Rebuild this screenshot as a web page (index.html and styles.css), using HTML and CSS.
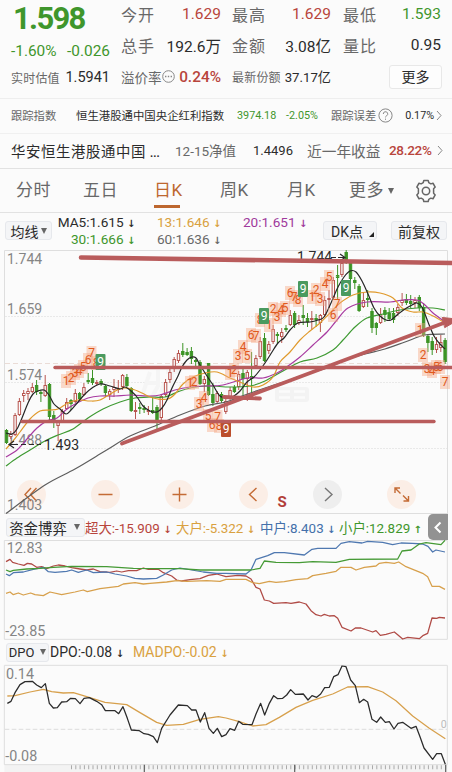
FILE: index.html
```html
<!DOCTYPE html>
<html lang="zh-CN">
<head>
    <meta charset="UTF-8">
    <meta name="viewport" content="width=device-width, initial-scale=1.0">
    <title>日K</title>
    <link rel="stylesheet" href="styles.css">
</head>
<body>
    <section class="quote">
        <div class="quote-col">
            <div class="price green">1.598</div>
            <div class="change green"><span>-1.60%</span><span>-0.026</span></div>
            <div class="cell estimate"><label>实时估值</label><b>1.5941</b></div>
        </div>
        <div class="quote-col">
            <div class="cell"><label>今开</label><b class="red">1.629</b></div>
            <div class="cell tall"><label>总手</label><b>192.6万</b></div>
            <div class="cell premium">
                <label>溢价率</label>
                <svg width="13" height="13" viewBox="0 0 13 13"><circle cx="6.5" cy="6.5" r="5.8" fill="none" stroke="#888"/><path d="M3 6.5h1.4M5.8 6.5h1.4M8.6 6.5H10" stroke="#888" stroke-width="1.3"/></svg>
                <b class="red strong">0.24%</b>
            </div>
        </div>
        <div class="quote-col">
            <div class="cell"><label>最高</label><b class="red">1.629</b></div>
            <div class="cell tall"><label>金额</label><b>3.08亿</b></div>
            <div class="cell shares"><label>最新份额</label><b>37.17亿</b></div>
        </div>
        <div class="quote-col">
            <div class="cell"><label>最低</label><b class="green">1.593</b></div>
            <div class="cell tall"><label>量比</label><b>0.95</b></div>
            <div class="cell last"><button class="more">更多</button></div>
        </div>
    </section>

    <section class="row index-row">
        <span class="w-label grey">跟踪指数</span>
        <span class="w-name">恒生港股通中国央企红利指数</span>
        <span class="w-value green">3974.18</span>
        <span class="w-pct green">-2.05%</span>
        <span class="grey">跟踪误差</span>
        <svg class="help" width="15" height="15" viewBox="0 0 15 15"><circle cx="7.5" cy="7.5" r="6.6"/><path d="M5.3 6a2.2 2.2 0 1 1 3.3 1.8Q7.5 8.400 7.5 9.400M7.500 10.600v1.200"/></svg>
        <span class="w-error">0.17%</span>
        <svg class="chev" width="6" height="11" viewBox="0 0 6 11"><path d="M1 1l4 4.500-4 4.500"/></svg>
    </section>

    <section class="row fund-row">
        <span class="w-fund">华安恒生港股通中国 <i>...</i></span>
        <span class="w-nav grey">12-15净值</span>
        <span class="w-navval">1.4496</span>
        <span class="w-year grey">近一年收益</span>
        <span class="w-rate red">28.22%</span>
        <svg class="chev" width="6" height="11" viewBox="0 0 6 11"><path d="M1 1l4 4.500-4 4.500"/></svg>
    </section>

    <nav class="tabs">
        <a>分时</a>
        <a>五日</a>
        <a class="active">日K</a>
        <a>周K</a>
        <a>月K</a>
        <a class="drop">更多<i class="caret"></i></a>
        <svg class="gear" width="24" height="24" viewBox="0 0 24 24"><path d="M9.200 3.700 9.800 1.500h4.400l.6 2.200 2 1.150 2.200-.6 2.200 3.800-1.600 1.650v4.600l1.600 1.650-2.200 3.800-2.200-.6-2 1.150-.6 2.200H9.800l-.6-2.200-2-1.150-2.200.6-2.200-3.800 1.600-1.650V9.700L2.800 8.050 5 4.250l2.200.6z"/><circle cx="12" cy="12" r="3.700"/></svg>
    </nav>

    <section class="ma-bar">
        <button class="chip ma-chip">均线<i class="caret"></i></button>
        <div class="ma-values">
            <span>MA5:1.615 <i>↓</i></span><span class="gold">13:1.646 <i>↓</i></span><span class="purple">20:1.651 <i>↓</i></span>
            <span class="green">30:1.666 <i>↓</i></span><span class="grey">60:1.636 <i>↓</i></span>
        </div>
        <button class="chip dk">DK点<i class="corner"></i></button>
        <button class="chip adj">前复权</button>
    </section>

    <svg class="kline" id="kline" width="452" height="264" viewBox="0 250 452 264">
        <g class="frame">
            <path d="M4.500 514V250.500H447.500V514M4.500 513.500H447.500"/>
            <path class="dash" d="M5 316.500H447M5 382.500H447M5 448.500H447"/>
            <path class="dash base" d="M5 363.500H447"/>
        </g>
        <g class="watermark">
            <path d="M150 372l-8 24M146 383h12M158 370v16l-6 11M166 372h13M172 372v22M164 384l-3 8M180 384l3 8"/>
            <rect x="275" y="387" width="34" height="15" rx="3"/>
            <path class="gap" d="M279 391.500h11M294 391.500h11M279 397.500h11M294 397.500h11"/>
        </g>
        <g class="buttons">
            <circle cx="31.500" cy="494.500" r="14.500"/>
            <circle cx="105.500" cy="494.500" r="14.500"/>
            <circle cx="179.500" cy="494.500" r="14.500"/>
            <circle cx="253.500" cy="494.500" r="14.500"/>
            <circle class="off" cx="327.500" cy="494.500" r="14.500"/>
            <circle cx="401.500" cy="494.500" r="14.500"/>
            <path d="M31 488l-6 6.500 6 6.500M36.500 488l-6 6.500 6 6.500M98.500 494.500h14M172.500 494.500h14M179.500 487.500v14M256.500 488l-7 6.500 7 6.500"/>
            <path class="off" d="M325 488l7 6.500-7 6.500"/>
            <path d="M395 493v-5h5M395 488l5.500 5.500M408.500 496v5h-5M408.500 501l-5.500-5.500"/>
        </g>
        <g class="axis">
            <text x="7" y="263.500">1.744</text>
            <text x="7" y="313.500">1.659</text>
            <text x="7" y="379.500">1.574</text>
            <text x="7" y="445">1.488</text>
            <text x="7" y="510">1.403</text>
        </g>
        <g id="candles"></g>
        <g id="averages"></g>
        <g id="counts"></g>
        <g class="marks">
            <text x="297" y="262">1.744</text>
            <path d="M331 257.500h5M338 257.500h6M340 254l5 3.500-5 3.500"/>
            <text x="44" y="449.500">1.493</text>
            <path d="M9 444.500h9M21 444.500h5M29 444.500h5M37 444.500h4M14 441l-5 3.500 5 3.500"/>
        </g>
        <g class="drawn">
            <path class="thick" d="M81 257.500L452 263"/>
            <path d="M55 367.500H452"/>
            <path d="M22 421.500H434"/>
            <path class="slope" d="M122 443.500L445 322.500M224 397L260 398.500"/>
            <path class="head" d="M442.500 317.500l9.500 1v5l-7 4z"/>
        </g>
        <text class="sell" x="277.500" y="507">S</text>
    </svg>

    <section class="sub-bar flow-bar">
        <button class="chip">资金博弈<i class="caret"></i></button>
        <span class="red">超大:-15.909 <i>↓</i></span>
        <span class="gold">大户:-5.322 <i>↓</i></span>
        <span class="blue">中户:8.403 <i>↓</i></span>
        <span class="green">小户:12.829 <i>↑</i></span>
        <button class="fold"><svg width="8" height="13" viewBox="0 0 8 13"><path d="M6.500 1.500l-5 5 5 5"/></svg></button>
    </section>

    <svg class="sub-chart" width="452" height="100" viewBox="0 90 1356 300">
        <path class="border" d="M13 91.500H1342V388H13z"/>
        <text x="20" y="130">12.83</text>
        <text x="16" y="378">-23.85</text>
        <polyline class="line-red" points="18,155 30,148 38,157 55,162 72,166 82,160 95,162 110,172 125,170 140,176 160,168 175,165 195,168 215,173 240,177 260,180 280,177 300,185 330,187 350,183 365,186 385,182 410,182 430,174 445,178 475,178 490,188 515,198 530,210 545,213 570,209 600,206 625,196 650,192 678,200 713,196 738,198 753,207 768,232 780,237 793,270 808,273 821,280 858,278 873,280 898,276 918,282 933,302 948,314 963,318 973,313 988,318 1003,317 1013,325 1026,352 1053,363 1066,354 1083,354 1118,366 1128,362 1141,376 1158,373 1183,366 1193,374 1208,387 1223,382 1258,386 1270,376 1283,370 1296,324 1310,325 1318,322 1335,324"/>
        <polyline class="line-blue" points="18,192 28,197 40,188 70,186 100,178 130,172 145,185 165,187 200,184 215,180 235,187 260,180 280,188 320,186 345,192 380,198 405,205 430,207 470,205 490,195 515,180 540,174 575,180 610,186 650,190 678,190 738,192 753,180 768,148 803,137 823,128 853,128 913,135 936,118 953,115 1008,115 1023,100 1048,95 1086,99 1103,94 1148,97 1178,104 1203,99 1238,100 1268,102 1284,109 1298,126 1308,120 1335,126"/>
        <polyline class="line-gold" points="18,250 30,246 40,254 55,249 70,255 92,249 105,254 130,257 150,246 185,254 225,246 250,240 262,245 300,236 355,229 370,222 405,218 430,222 450,220 500,216 530,212 560,214 620,212 660,214 678,208 738,208 758,218 778,221 808,214 828,217 853,215 888,209 923,206 938,197 978,190 1008,184 1023,172 1053,172 1068,180 1093,172 1128,168 1138,160 1158,157 1183,160 1196,156 1218,170 1268,190 1283,200 1296,229 1318,229 1335,238"/>
        <polyline class="line-green" points="18,180 30,185 40,181 80,177 120,175 160,172 215,169 320,170 400,175 470,176 540,176 600,180 678,180 753,180 780,175 793,153 828,157 898,158 938,155 1008,157 1048,148 1193,147 1206,123 1233,120 1258,102 1278,98 1323,104 1335,91"/>
    </svg>

    <section class="sub-bar dpo-bar">
        <button class="chip">DPO<i class="caret"></i></button>
        <span>DPO:-0.08 <i>↓</i></span>
        <span class="gold">MADPO:-0.02 <i>↓</i></span>
    </section>

    <svg class="sub-chart" width="452" height="108" viewBox="0 462 1356 324">
        <rect class="ruler" x="13" y="764" width="1329" height="22"/>
        <path class="border" d="M13 466H1342V764H13z"/>
        <path class="zero" d="M14 658H1341"/>
        <text x="18" y="506">0.14</text>
        <text x="16" y="752">-0.08</text>
        <text class="zero-label" x="1322" y="653">0</text>
        <polyline class="line-gold" points="22,558 45,557 90,546 130,538 155,545 190,549 220,548 260,560 315,577 380,584 420,608 470,637 500,646 550,643 600,628 655,620 678,624 718,635 758,648 798,644 838,622 888,592 938,571 998,552 1043,531 1103,530 1148,546 1188,572 1238,618 1288,655 1336,686"/>
        <polyline class="line-black" points="22,580 33,574 45,548 60,524 75,515 97,514 110,525 124,533 136,521 142,550 148,580 160,594 172,593 185,576 200,575 212,565 226,566 240,581 252,565 268,563 290,574 305,584 316,602 345,602 356,611 369,590 382,625 394,660 418,662 432,671 445,673 460,680 472,698 485,655 510,615 535,585 562,587 575,600 588,600 601,636 614,608 627,655 640,670 652,655 665,680 678,674 690,656 704,661 716,634 728,643 756,644 768,612 782,580 794,615 808,580 821,557 833,566 848,565 860,555 872,539 886,553 910,552 924,570 936,557 950,562 962,552 974,533 988,532 1001,500 1014,494 1026,468 1038,470 1052,510 1066,527 1078,578 1091,568 1103,576 1116,628 1130,637 1142,621 1156,637 1168,635 1182,657 1194,640 1208,637 1233,655 1248,649 1260,680 1272,714 1298,748 1310,731 1324,731 1336,763"/>
        <path class="ticks" d="M213 772H1342"/>
        <path class="major" d="M433 764v22M884 764v22M1337 764v22"/>
    </svg>

    <script src="script.js"></script>
</body>
</html>
```

FILE: styles.css
```css
:root {
    --red: #b8453c;
    --green: #3f962c;
    --gold: #d9a140;
    --purple: #a03a9c;
    --blue: #4470aa;
    --text: #2b2b2b;
    --grey: #686868;
    --line: #e2e2e2;
}

* {
    box-sizing: border-box;
    margin: 0;
    padding: 0;
}

body {
    width: 452px;
    height: 772px;
    overflow: hidden;
    background: #fbfbfb;
    color: var(--text);
    font-family: Roboto, "Noto Sans CJK SC", sans-serif;
    white-space: nowrap;
}

i, b {
    font-style: normal;
    font-weight: 400;
}

svg {
    display: block;
    flex: none;
}

button {
    font-family: inherit;
    color: inherit;
    white-space: nowrap;
}

.red { color: var(--red); }
.green { color: var(--green); }
.gold { color: var(--gold); }
.purple { color: var(--purple); }
.blue { color: var(--blue); }
.grey { color: var(--grey); }

/* quote header */
.quote {
    display: grid;
    grid-template-columns: 99px 100px 99px 99px;
    column-gap: 11px;
    height: 99px;
    padding-left: 11px;
    border-bottom: 1px solid #eee;
}

.quote-col {
    margin-top: -1px;
}

.price {
    height: 36px;
    padding-left: 2px;
    line-height: 39px;
    font-size: 31px;
    font-weight: 700;
    letter-spacing: -1.7px;
}

.change {
    display: flex;
    justify-content: space-between;
    height: 33px;
    line-height: 33px;
    font-size: 15.4px;
}

.cell {
    display: flex;
    align-items: center;
    justify-content: space-between;
    height: 29px;
    font-size: 15.5px;
}

.cell label {
    color: var(--grey);
    font-size: 16px;
    letter-spacing: 1px;
}

.cell.tall {
    height: 34px;
}

.quote-col:nth-child(4) .cell {
    padding-left: 1px;
}

.cell.estimate {
    height: 18px;
    font-size: 14.5px;
}

.cell.estimate label,
.cell.shares label {
    font-size: 12px;
    letter-spacing: 0.2px;
}

.cell.shares {
    font-size: 13.2px;
}

.cell.premium label {
    font-size: 13.5px;
    letter-spacing: 0;
}

.cell .strong {
    font-weight: 500;
    font-size: 15.4px;
    margin-left: 3px;
}

.cell.last {
    justify-content: flex-end;
}

.more {
    width: 53px;
    height: 24px;
    margin-right: -1px;
    border: 1px solid #e8e8e8;
    border-radius: 3px;
    background: #fdfdfd;
    font-size: 14px;
    line-height: 20px;
}

/* index and fund rows */
.row {
    display: flex;
    align-items: center;
    height: 35px;
    padding-left: 11px;
    padding-bottom: 2px;
    border-bottom: 1px solid #f0f0f0;
}

.index-row {
    font-size: 11.3px;
}

.index-row .w-label { width: 65px; }
.index-row .w-name { width: 161px; font-size: 11.4px; }
.index-row .w-value { width: 49px; font-size: 10.8px; }
.index-row .w-pct { width: 45px; font-size: 10.8px; }
.index-row .w-error { width: 32px; font-size: 10.8px; }

.help {
    margin: 0 12px 0 2px;
    fill: none;
    stroke: #888;
}

.chev {
    fill: none;
    stroke: #888;
    margin-left: -1px;
}

.fund-row {
    border-bottom-color: var(--line);
    font-size: 13.5px;
}

.fund-row .w-fund { width: 164px; font-size: 14.4px; letter-spacing: 0.6px; }
.fund-row .w-fund i { font-size: 11px; font-weight: 700; letter-spacing: 0; }
.fund-row .w-nav { width: 78px; }
.fund-row .w-navval { width: 54px; font-size: 13px; }
.fund-row .w-year { width: 82px; font-size: 14.7px; }
.fund-row .w-rate { width: 49px; font-size: 13.5px; font-weight: 500; letter-spacing: -0.3px; }

/* period tabs */
.tabs {
    display: flex;
    align-items: center;
    height: 44px;
    padding-left: 16px;
    border-bottom: 1px solid var(--line);
    color: var(--grey);
    font-size: 17px;
}

.tabs a {
    width: 67px;
    height: 43px;
    line-height: 43px;
    letter-spacing: 0.4px;
}

.tabs a:nth-child(2) { width: 71px; }
.tabs a:nth-child(3) { width: 66px; }
.tabs a:nth-child(5) { width: 62px; }

.tabs .active {
    color: #bd672f;
    background: linear-gradient(#bd672f, #bd672f) 0 36px / 26px 3px no-repeat;
}

.tabs .drop {
    display: flex;
    align-items: center;
    width: 65px;
}

.caret {
    display: inline-block;
    border: 3.5px solid transparent;
    border-top: 6px solid #666;
    border-bottom: 0;
    margin-left: 4px;
}

.gear {
    fill: none;
    stroke: #666;
    stroke-width: 1.5;
    stroke-linejoin: round;
}

/* moving average legend */
.ma-bar {
    display: flex;
    align-items: center;
    height: 37px;
    padding-left: 5px;
    padding-bottom: 2px;
}

.chip {
    display: flex;
    align-items: center;
    justify-content: center;
    height: 19px;
    border: 1px solid #e6e8ec;
    border-radius: 3px;
    background: #f4f5f7;
    font-size: 14px;
}

.ma-chip {
    width: 47px;
}

.ma-chip .caret {
    margin-left: 2px;
}

.ma-values {
    display: grid;
    grid-template-columns: 77px 86px 86px;
    grid-auto-rows: 17px;
    justify-items: end;
    width: 271px;
    padding-left: 4px;
    line-height: 17px;
    font-size: 13.6px;
}

.ma-values i,
.sub-bar i:not(.caret) {
    display: inline-block;
    width: 6px;
    font: 700 10px "DejaVu Sans", sans-serif;
}

.dk {
    width: 54px;
    justify-content: space-between;
    padding: 0 2px 0 7px;
}

.corner {
    align-self: flex-end;
    margin-bottom: 2px;
    border-left: 5px solid transparent;
    border-bottom: 5px solid #222;
}

.adj {
    width: 56px;
    margin-left: 14px;
}

/* candle chart */
.frame path {
    fill: none;
    stroke: #dedede;
}

.frame .dash {
    stroke: #e9e9e9;
    stroke-dasharray: 2 1;
}

.frame .base {
    stroke: #eadcd6;
    stroke-dasharray: 5 3;
}

.watermark path {
    fill: none;
    stroke: #f5f5f5;
    stroke-width: 4;
}

.watermark rect {
    fill: #f3f3f3;
}

.watermark .gap {
    stroke: #fbfbfb;
    stroke-width: 2.5;
}

.axis text {
    font-size: 14px;
    fill: #858585;
}

.buttons circle { fill: #fbeee6; }
.buttons circle.off { fill: #eee; }

.buttons path {
    fill: none;
    stroke: #c46b35;
    stroke-width: 1.4;
}

.buttons path.off { stroke: #777; }

#averages path {
    fill: none;
    stroke-width: 1.2;
}

.up { stroke: #b85650; fill: #fbfbfb; }
.down { stroke: #3c9426; fill: #3c9426; }

#counts rect { fill: #f5a883; fill-opacity: 0.42; }
#counts text { fill: #e0591c; }
#counts .nine rect { fill: #4a9a5f; fill-opacity: 1; }
#counts .nine.low rect { fill: #bb4e2c; }
#counts .nine text { fill: #fff; }

#counts text {
    font-size: 12px;
    text-anchor: middle;
}

.marks text {
    font-size: 14px;
    fill: #2b2b2b;
}

.marks path {
    fill: none;
    stroke: #2b2b2b;
    stroke-width: 1.2;
}

.drawn path {
    fill: none;
    stroke: #b95c5c;
    stroke-width: 3.4;
    stroke-linecap: round;
}

.drawn .thick { stroke-width: 4.6; }
.drawn .slope { stroke-width: 3.8; }
.drawn .head { fill: #b95c5c; stroke-width: 1; }

.sell {
    fill: #b23f39;
    font-size: 15px;
    font-weight: 700;
}

/* indicator panels */
.sub-bar {
    display: flex;
    align-items: center;
    height: 26px;
    padding-left: 6px;
}

.sub-bar .chip .caret {
    margin-left: 7px;
}

.flow-bar .chip {
    width: 79px;
    padding-right: 2px;
    font-size: 14.4px;
}

.flow-bar span:nth-of-type(1) { width: 91px; }
.flow-bar span:nth-of-type(2) { width: 84px; }
.flow-bar span:nth-of-type(3) { width: 79px; }
.flow-bar span:nth-of-type(4) { width: 89px; }

.flow-bar span {
    font-size: 13.4px;
}

.flow-bar .fold {
    display: flex;
    align-items: center;
    justify-content: center;
    width: 20px;
    height: 26px;
    border: 0;
    border-radius: 5px 0 0 5px;
    background: #929292;
}

.fold path {
    fill: none;
    stroke: #fff;
    stroke-width: 2;
}

.dpo-bar {
    height: 24px;
    font-size: 14px;
}

.dpo-bar .chip {
    width: 43px;
    font-size: 13px;
    margin-right: 1px;
}

.dpo-bar .chip .caret {
    margin-left: 6px;
}

.dpo-bar span:nth-of-type(1) { width: 83px; }

.sub-chart text {
    font-size: 43px;
    fill: #858585;
}

.sub-chart .zero-label {
    font-size: 32px;
    fill: #bbb;
}

.sub-chart polyline,
.sub-chart path {
    fill: none;
    stroke-width: 3.8;
    stroke-linejoin: round;
}

.sub-chart .border { stroke: #dedede; stroke-width: 3; }
.sub-chart .zero { stroke: #ddd; stroke-width: 3; stroke-dasharray: 14 7; }
.sub-chart .ruler { fill: #f3f3f3; }
.sub-chart .ticks { stroke: #aaa; stroke-width: 12; stroke-dasharray: 3 9.900; }
.sub-chart .major { stroke: #666; }
.line-red { stroke: #b04b46; }
.line-blue { stroke: #4f78b0; }
.line-gold { stroke: #d7a04c; }
.line-green { stroke: #459a35; }
.line-black { stroke: #2b2b2b; }
```

FILE: script.js
```js
const SVG = 'http://www.w3.org/2000/svg';

function add(parent, tag, attrs, text) {
    const el = document.createElementNS(SVG, tag);
    for (const key in attrs) el.setAttribute(key, attrs[key]);
    if (text !== undefined) el.textContent = text;
    parent.appendChild(el);
    return el;
}

// [direction, high, body top, body bottom, low]
const candles = [
    ['d', 429, 430, 443, 444], ['u', 431, 434, 437, 439], ['u', 413, 415, 435, 436], ['u', 398, 401, 415, 416],
    ['u', 390, 393, 396, 402], ['u', 388, 391, 394, 400], ['u', 383, 387, 392, 393], ['d', 380, 385, 392, 395],
    ['d', 391, 392, 394, 402], ['u', 375, 385, 396, 397], ['d', 383, 384, 417, 421], ['d', 411, 415, 423, 428],
    ['u', 420, 421, 426, 441], ['u', 409, 411, 421, 422], ['u', 398, 402, 409, 410], ['d', 399, 400, 404, 410],
    ['u', 389, 393, 402, 403], ['d', 392, 393, 399, 401], ['u', 383, 387, 395, 396], ['d', 373, 380, 382, 384],
    ['d', 370, 378, 383, 385], ['u', 380, 382, 384, 386], ['d', 379, 381, 384, 386], ['d', 385, 386, 393, 397],
    ['u', 389, 391, 395, 400], ['u', 379, 387, 390, 397], ['u', 380, 388, 390, 393], ['u', 374, 375, 387, 390],
    ['d', 374, 377, 386, 387], ['d', 387, 388, 411, 412], ['u', 402, 410, 412, 419], ['d', 403, 407, 409, 414],
    ['d', 405, 408, 410, 413], ['u', 406, 410, 412, 415], ['d', 397, 410, 413, 414], ['d', 405, 407, 420, 429],
    ['u', 394, 396, 418, 420], ['u', 379, 382, 395, 397], ['u', 368, 372, 380, 383], ['u', 357, 359, 367, 372],
    ['u', 350, 353, 361, 363], ['d', 343, 351, 355, 357], ['d', 348, 352, 355, 356], ['d', 347, 351, 359, 364],
    ['d', 359, 360, 362, 367], ['d', 360, 362, 384, 385], ['u', 376, 379, 384, 392], ['d', 363, 363, 395, 396],
    ['d', 383, 394, 403, 406], ['u', 391, 393, 402, 404], ['d', 392, 394, 401, 403], ['u', 399, 401, 412, 414],
    ['u', 387, 390, 398, 400], ['d', 385, 387, 392, 393], ['u', 371, 374, 387, 390], ['d', 369, 373, 379, 400],
    ['u', 370, 372, 379, 401], ['d', 352, 376, 379, 397], ['u', 355, 358, 366, 367], ['u', 337, 341, 357, 359],
    ['d', 333, 338, 361, 362], ['u', 341, 344, 351, 354], ['u', 325, 329, 342, 344], ['d', 332, 334, 336, 343],
    ['u', 328, 332, 337, 343], ['d', 325, 328, 330, 332], ['u', 310, 315, 325, 326], ['d', 311, 313, 325, 328],
    ['u', 315, 320, 323, 325], ['d', 305, 315, 318, 325], ['d', 313, 318, 322, 327], ['u', 311, 318, 320, 330],
    ['d', 314, 318, 320, 327], ['u', 314, 315, 323, 332], ['u', 296, 300, 315, 317], ['u', 290, 298, 300, 308],
    ['u', 277, 280, 298, 300], ['d', 265, 275, 278, 300], ['u', 260, 263, 275, 277], ['d', 250, 252, 263, 264],
    ['d', 262, 263, 279, 284], ['d', 277, 280, 283, 289], ['d', 284, 286, 311, 312], ['u', 292, 300, 307, 308],
    ['d', 290, 298, 300, 307], ['d', 308, 311, 328, 333], ['d', 322, 323, 328, 335], ['u', 308, 314, 323, 324],
    ['d', 307, 310, 315, 322], ['d', 308, 313, 319, 321], ['d', 308, 313, 320, 323], ['u', 304, 307, 313, 316],
    ['u', 293, 300, 303, 306], ['d', 294, 299, 303, 305], ['d', 295, 301, 304, 308], ['u', 297, 300, 303, 308],
    ['d', 295, 297, 308, 311], ['d', 303, 307, 335, 337], ['d', 334, 336, 343, 352], ['d', 337, 341, 350, 355],
    ['u', 337, 344, 350, 353], ['u', 335, 342, 348, 352], ['d', 338, 340, 362, 364]
];

const averages = {
    '#5d5d5d': [6, 513.5, 45, 485, 75, 469, 105, 451, 130, 436, 155, 426, 180, 415, 205, 406, 226, 402, 242, 396, 265, 388, 290, 380, 300, 376, 330, 367, 345, 360, 365, 354, 385, 349, 405, 342, 425, 335, 445, 334],
    '#3e9a32': [6, 466, 17, 458, 30, 450, 45, 441, 58, 435, 73, 429, 88, 418, 103, 409, 120, 402, 135, 398, 150, 397, 165, 397, 180, 391, 195, 387, 210, 386, 230, 387, 250, 386, 265, 381, 283, 371, 300, 362, 317, 358, 333, 350, 343, 340, 355, 327, 367, 318, 383, 314, 400, 310, 417, 308, 433, 308, 445, 310],
    '#a83aa0': [6, 457, 17, 450, 27, 439, 37, 428, 47, 421, 57, 418, 67, 409, 77, 403, 88, 398, 100, 396, 115, 396, 130, 395, 150, 396, 160, 395, 175, 390, 190, 387, 205, 386, 223, 385, 247, 378, 263, 378, 277, 373, 288, 366, 300, 357, 313, 345, 327, 332, 337, 320, 348, 308, 367, 302, 390, 302, 403, 300, 417, 300, 425, 305, 433, 313, 445, 322],
    '#e09a2c': [6, 449, 13, 441, 20, 432, 30, 419, 40, 411, 50, 410, 58, 409, 68, 403, 78, 400, 90, 401, 100, 400, 112, 393, 122, 388, 132, 389, 142, 393, 150, 397, 158, 399, 168, 399, 175, 394, 183, 384, 193, 377, 205, 373, 217, 372, 230, 378, 240, 382, 253, 387, 263, 385, 273, 377, 280, 362, 290, 352, 300, 340, 310, 331, 320, 323, 330, 313, 340, 303, 353, 295, 367, 292, 380, 293, 393, 298, 402, 308, 413, 312, 423, 312, 433, 316, 445, 323],
    '#262626': [6, 433, 12, 434, 17, 429, 22, 418, 28, 403, 33, 394, 38, 391, 44, 390, 49, 395, 54, 404, 60, 409, 66, 414, 71, 410, 78, 402, 85, 394, 92, 388, 100, 384, 110, 386, 120, 389, 125, 387, 131, 391, 137, 397, 143, 406, 150, 411, 157, 412, 162, 408, 167, 400, 172, 388, 178, 376, 182, 367, 187, 360, 192, 357, 196, 358, 200, 365, 207, 376, 213, 385, 220, 396, 228, 398, 234, 396, 240, 391, 247, 382, 254, 377, 260, 370, 267, 360, 272, 352, 278, 343, 284, 338, 290, 330, 298, 323, 310, 322, 318, 320, 324, 317, 331, 303, 338, 287, 344, 277, 350, 271, 356, 272, 362, 281, 368, 294, 374, 308, 380, 316, 386, 320, 391, 320, 397, 315, 405, 309, 412, 305, 417, 303, 422, 307, 428, 322, 434, 336, 440, 344, 445, 349]
};

// [digit, center x, center y]
const counts = [
    [1, 66, 381], [2, 71, 378], [3, 75, 373], [4, 79, 371], [5, 83, 367], [6, 88, 360], [7, 91.5, 353], [8, 96, 363],
    [1, 190, 383], [2, 194, 382], [3, 199, 404], [4, 204, 398], [5, 208, 416], [7, 217.5, 417], [6, 212, 425], [8, 219, 426],
    [1, 230, 373], [2, 234, 370], [3, 238, 356], [4, 243, 347], [5, 247, 356], [6, 251, 335], [7, 256, 336], [8, 260, 320],
    [1, 269, 325], [2, 273, 309], [3, 277, 317], [4, 281, 310], [5, 285, 308], [6, 290, 293], [7, 294, 297], [8, 298, 300],
    [1, 312, 297], [2, 316, 290], [3, 320, 299], [4, 325, 284], [5, 329, 277], [6, 333, 315], [7, 337, 304],
    [1, 420, 330], [2, 423, 355], [3, 427, 369], [4, 432, 371], [5, 436, 367], [6, 440, 367], [7, 445, 382]
];
const nines = [[100.5, 362], [264, 316], [303, 289], [346, 288], [226, 429, 'low']];

// smooth path through a flat list of x, y pairs
function curve(p) {
    let d = `M${p[0]} ${p[1]}`;
    for (let i = 2; i < p.length; i += 2) {
        const x0 = p[i - 4] ?? p[i - 2], y0 = p[i - 3] ?? p[i - 1];
        const x3 = p[i + 2] ?? p[i], y3 = p[i + 3] ?? p[i + 1];
        d += `C${p[i - 2] + (p[i] - x0) / 6} ${p[i - 1] + (p[i + 1] - y0) / 6} ${p[i] - (x3 - p[i - 2]) / 6} ${p[i + 1] - (y3 - p[i - 1]) / 6} ${p[i]} ${p[i + 1]}`;
    }
    return d;
}

const candleLayer = document.getElementById('candles');
candles.forEach(([dir, high, top, bottom, low], i) => {
    const x = 6.5 + i * 4.3;
    const g = add(candleLayer, 'g', { class: dir === 'u' ? 'up' : 'down' });
    add(g, 'path', { d: `M${x} ${high}V${low}` });
    add(g, 'rect', { x: x - 1.2, y: top + 0.5, width: 2.4, height: bottom - top - 1 });
});

const averageLayer = document.getElementById('averages');
for (const color in averages) {
    add(averageLayer, 'path', { d: curve(averages[color]), stroke: color });
}

// tiles first, so that no tile covers a neighbour's digit
const countLayer = document.getElementById('counts');
counts.forEach(([n, x, y]) => add(countLayer, 'rect', { x: x - 5, y: y - 7, width: 10, height: 14 }));
counts.forEach(([n, x, y]) => add(countLayer, 'text', { x, y: y + 4 }, n));
nines.forEach(([x, y, low]) => {
    const g = add(countLayer, 'g', { class: low ? 'nine low' : 'nine' });
    add(g, 'rect', { x: x - 5, y: y - 8, width: 10, height: 16, rx: 1 });
    add(g, 'text', { x, y: y + 4 }, 9);
});
```
